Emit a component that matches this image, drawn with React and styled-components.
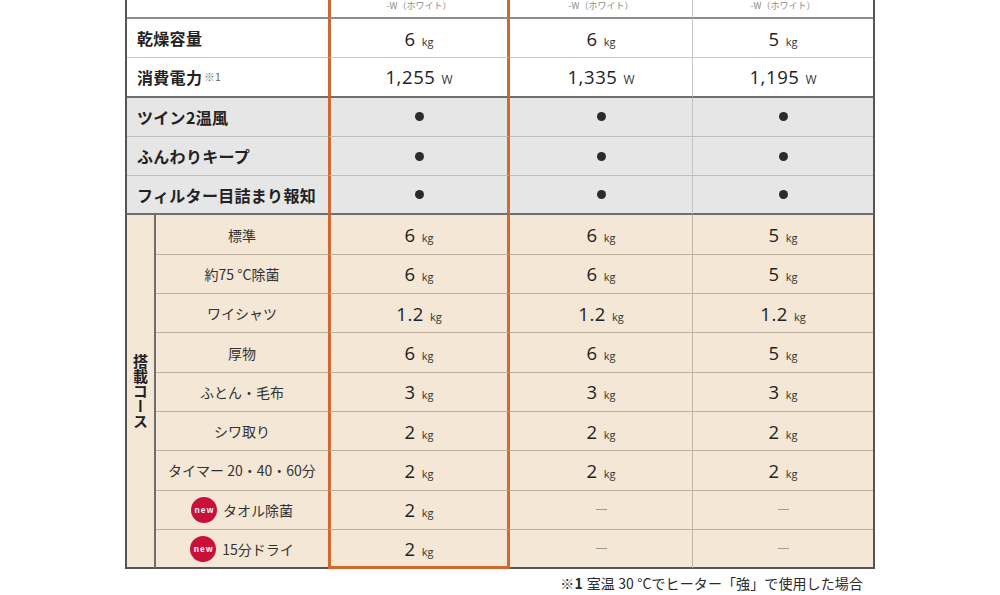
import React from 'react';
import styled, { createGlobalStyle, css } from 'styled-components';

const GlobalStyle = createGlobalStyle`
  html, body { margin: 0; padding: 0; background: #ffffff; }
  body {
    font-family: "Noto Sans CJK JP", "Noto Sans", sans-serif;
    color: #222;
  }
`;

const ORANGE = '#d2682f';

const tones = {
  white: { bg: '#ffffff', line: '#c9c9c9', divider: '#c6c6c6' },
  gray: { bg: '#e6e6e6', line: '#bdbdbd', divider: '#c2c2c2' },
  cream: { bg: '#f4e7d6', line: '#bcb09f', divider: '#bfb3a3' },
};

const edges = {
  thin: (tone) => `1px solid ${tones[tone].line}`,
  header: () => '2px solid #8c8c8c',
  section: () => '2px solid #6e6e6e',
  outer: () => '2px solid #555555',
};

const Page = styled.div`
  width: 1000px;
  height: 595px;
  overflow: hidden;
  display: flex;
  flex-direction: column;
  align-items: center;
`;

const Table = styled.div`
  display: grid;
  grid-template-columns: 29px 172px 182px 183px 180px;
  grid-template-rows: 19px repeat(14, 39.3px);
  border-left: 2px solid #555555;
  border-right: 2px solid #555555;
`;

const Cell = styled.div`
  box-sizing: border-box;
  display: flex;
  align-items: center;
  justify-content: center;
  background: ${(p) => tones[p.$tone].bg};
  border-bottom: ${(p) => edges[p.$edge](p.$tone)};
  min-width: 0;
`;

const LabelCell = styled(Cell)`
  grid-column: span 2;
  justify-content: flex-start;
  padding-left: 10px;
  font-size: 16px;
  font-weight: 700;
  letter-spacing: 0.3px;
  color: #222;
`;

const HeaderLabel = styled(Cell)`
  grid-column: span 2;
`;

const ModelCell = styled(Cell)`
  align-items: flex-start;
  padding-top: 0;
  font-size: 9px;
  line-height: 11px;
  color: #8a8a8a;
  ${(p) =>
    p.$highlight &&
    css`
      border-left: 3px solid ${ORANGE};
      border-right: 3px solid ${ORANGE};
    `}
  ${(p) =>
    p.$divider &&
    css`
      border-right: 1px solid ${tones[p.$tone].divider};
    `}
`;

const ValueCell = styled(Cell)`
  ${(p) =>
    p.$highlight &&
    css`
      border-left: 3px solid ${ORANGE};
      border-right: 3px solid ${ORANGE};
    `}
  ${(p) =>
    p.$highlight &&
    p.$last &&
    css`
      border-bottom: 3px solid ${ORANGE};
    `}
  ${(p) =>
    p.$divider &&
    css`
      border-right: 1px solid ${tones[p.$tone].divider};
    `}
`;

const SideCell = styled(Cell)`
  grid-row: span 9;
  border-right: 2px solid #6e6e6e;
`;

const SideText = styled.span`
  writing-mode: vertical-rl;
  text-orientation: upright;
  font-size: 15px;
  font-weight: 700;
  line-height: 1;
  letter-spacing: 0;
  color: #222;
`;

const CourseCell = styled(Cell)`
  gap: 6px;
  font-size: 14px;
  color: #333;
  white-space: nowrap;
`;

const Note = styled.sup`
  font-size: 10.5px;
  font-weight: 400;
  color: #666;
  margin-left: 2px;
  vertical-align: 3px;
  line-height: 1;
`;

const Value = styled.span`
  display: inline-flex;
  align-items: baseline;
  gap: 6px;
`;

const Num = styled.span`
  font-family: "Open Sans", "Noto Sans", sans-serif;
  font-size: 18.5px;
  letter-spacing: 0.6px;
  color: #222;
`;

const Unit = styled.span`
  font-family: "Open Sans", "Noto Sans", sans-serif;
  font-size: ${(p) => (p.$watt ? '12px' : '11px')};
  color: #333;
`;

const Dot = styled.span`
  width: 9px;
  height: 9px;
  border-radius: 50%;
  background: #2b2b2b;
`;

const Dash = styled.span`
  width: 11px;
  height: 1px;
  background: #9c9c9c;
`;

const NewBadge = styled.span`
  flex: none;
  width: 26px;
  height: 26px;
  border-radius: 50%;
  background: #c8103a;
  color: #ffffff;
  display: inline-flex;
  align-items: center;
  justify-content: center;
  font-family: "Liberation Sans", Arial, sans-serif;
  font-weight: 700;
  font-size: 8.5px;
  letter-spacing: 1.2px;
  padding-left: 1px;
  box-sizing: border-box;
`;

const Footnote = styled.p`
  width: 750px;
  box-sizing: border-box;
  margin: 4px 0 0;
  padding-right: 12px;
  text-align: right;
  font-size: 14px;
  line-height: 20px;
  color: #2a2a2a;
  letter-spacing: 0.1px;
`;

const FootMark = styled.b`
  font-weight: 700;
  margin-right: 4px;
`;

const specRows = [
  { label: '乾燥容量', values: [['6', 'kg'], ['6', 'kg'], ['5', 'kg']], edge: 'thin' },
  { label: '消費電力', note: '※1', values: [['1,255', 'W'], ['1,335', 'W'], ['1,195', 'W']], edge: 'section' },
];

const featureRows = [
  { label: 'ツイン2温風', edge: 'thin' },
  { label: 'ふんわりキープ', edge: 'thin' },
  { label: 'フィルター目詰まり報知', edge: 'section' },
];

const courses = [
  { name: '標準', values: ['6', '6', '5'] },
  { name: '約75 °C除菌', values: ['6', '6', '5'] },
  { name: 'ワイシャツ', values: ['1.2', '1.2', '1.2'] },
  { name: '厚物', values: ['6', '6', '5'] },
  { name: 'ふとん・毛布', values: ['3', '3', '3'] },
  { name: 'シワ取り', values: ['2', '2', '2'] },
  { name: 'タイマー 20・40・60分', values: ['2', '2', '2'] },
  { name: 'タオル除菌', isNew: true, values: ['2', null, null] },
  { name: '15分ドライ', isNew: true, values: ['2', null, null] },
];

const Amount = ({ num, unit }) => (
  <Value>
    <Num>{num}</Num>
    <Unit $watt={unit === 'W'}>{unit}</Unit>
  </Value>
);

export default function App() {
  return (
    <Page>
      <GlobalStyle />
      <Table>
        <HeaderLabel $tone="white" $edge="header" />
        {[0, 1, 2].map((i) => (
          <ModelCell key={i} $tone="white" $edge="header" $highlight={i === 0} $divider={i === 1}>
            -W（ホワイト）
          </ModelCell>
        ))}

        {specRows.map((row) => (
          <React.Fragment key={row.label}>
            <LabelCell $tone="white" $edge={row.edge}>
              {row.label}
              {row.note && <Note>{row.note}</Note>}
            </LabelCell>
            {row.values.map(([n, u], i) => (
              <ValueCell key={i} $tone="white" $edge={row.edge} $highlight={i === 0} $divider={i === 1}>
                <Amount num={n} unit={u} />
              </ValueCell>
            ))}
          </React.Fragment>
        ))}

        {featureRows.map((row) => (
          <React.Fragment key={row.label}>
            <LabelCell $tone="gray" $edge={row.edge}>{row.label}</LabelCell>
            {[0, 1, 2].map((i) => (
              <ValueCell key={i} $tone="gray" $edge={row.edge} $highlight={i === 0} $divider={i === 1}>
                <Dot />
              </ValueCell>
            ))}
          </React.Fragment>
        ))}

        <SideCell $tone="cream" $edge="outer">
          <SideText>搭載コース</SideText>
        </SideCell>
        {courses.map((c, r) => {
          const last = r === courses.length - 1;
          const edge = last ? 'outer' : 'thin';
          return (
            <React.Fragment key={c.name}>
              <CourseCell $tone="cream" $edge={edge}>
                {c.isNew && <NewBadge>new</NewBadge>}
                {c.name}
              </CourseCell>
              {c.values.map((v, i) => (
                <ValueCell
                  key={i}
                  $tone="cream"
                  $edge={edge}
                  $highlight={i === 0}
                  $last={last}
                  $divider={i === 1}
                >
                  {v ? <Amount num={v} unit="kg" /> : <Dash />}
                </ValueCell>
              ))}
            </React.Fragment>
          );
        })}
      </Table>
      <Footnote>
        <FootMark>※1</FootMark>室温 30 °Cでヒーター「強」で使用した場合
      </Footnote>
    </Page>
  );
}
